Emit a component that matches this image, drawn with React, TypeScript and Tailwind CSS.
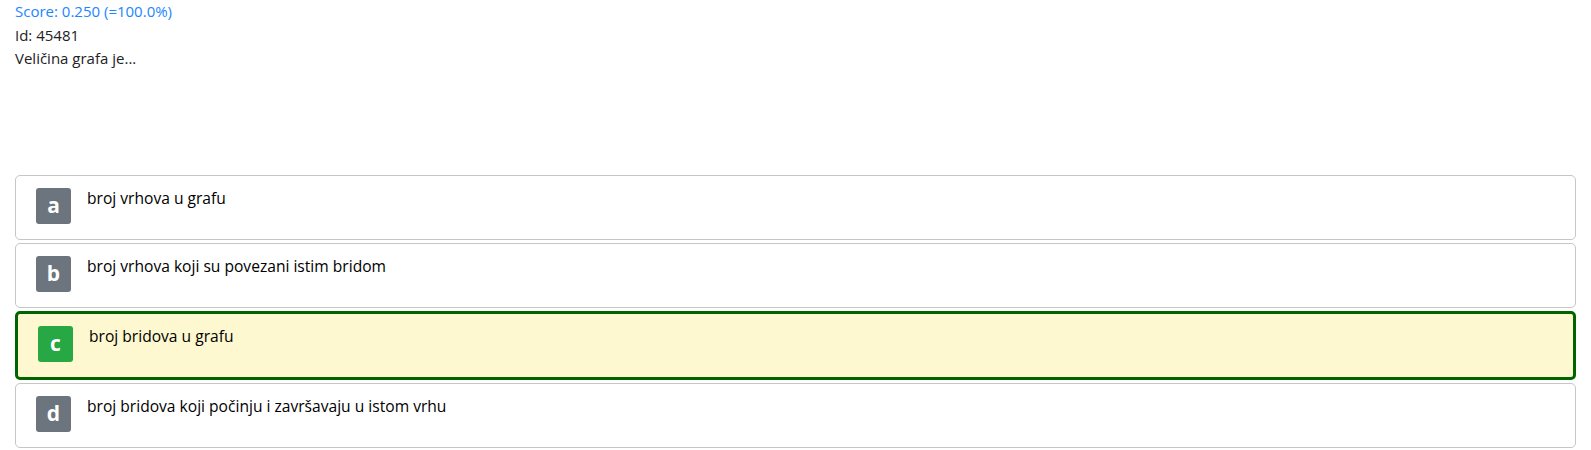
const answers = [
  { letter: 'a', text: 'broj vrhova u grafu', correct: false },
  { letter: 'b', text: 'broj vrhova koji su povezani istim bridom', correct: false },
  { letter: 'c', text: 'broj bridova u grafu', correct: true },
  { letter: 'd', text: 'broj bridova koji počinju i završavaju u istom vrhu', correct: false },
]

export default function App() {
  return (
    <div className="px-[15px] font-['Open_Sans',sans-serif] text-[15px] text-[#222]">
      <div className="leading-[23.5px]">
        <div className="text-[#1a86ff]">Score: 0.250 (=100.0%)</div>
        <div>Id: 45481</div>
        <div>Veličina grafa je...</div>
      </div>

      <div className="mt-[104px] flex flex-col gap-[3px]">
        {answers.map((a) => (
          <div
            key={a.letter}
            className={
              a.correct
                ? 'flex items-start rounded-[5px] border-[3px] border-[#006400] bg-[#fdf8cf] pl-5 pt-3 pb-[15px]'
                : 'flex items-start rounded-[5px] border border-[#c6c6c6] bg-white pl-5 pt-3 pb-[15px]'
            }
          >
            <span
              className={
                a.correct
                  ? 'flex h-9 w-[35px] items-center justify-center rounded-[3px] bg-[#28a745] text-[21px] font-bold text-white'
                  : 'flex h-9 w-[35px] items-center justify-center rounded-[3px] bg-[#6c757d] text-[21px] font-bold text-white'
              }
            >
              {a.letter}
            </span>
            <p className="ml-4 mt-[-1px] text-[15.6px] leading-[22px] text-black">{a.text}</p>
          </div>
        ))}
      </div>
    </div>
  )
}
